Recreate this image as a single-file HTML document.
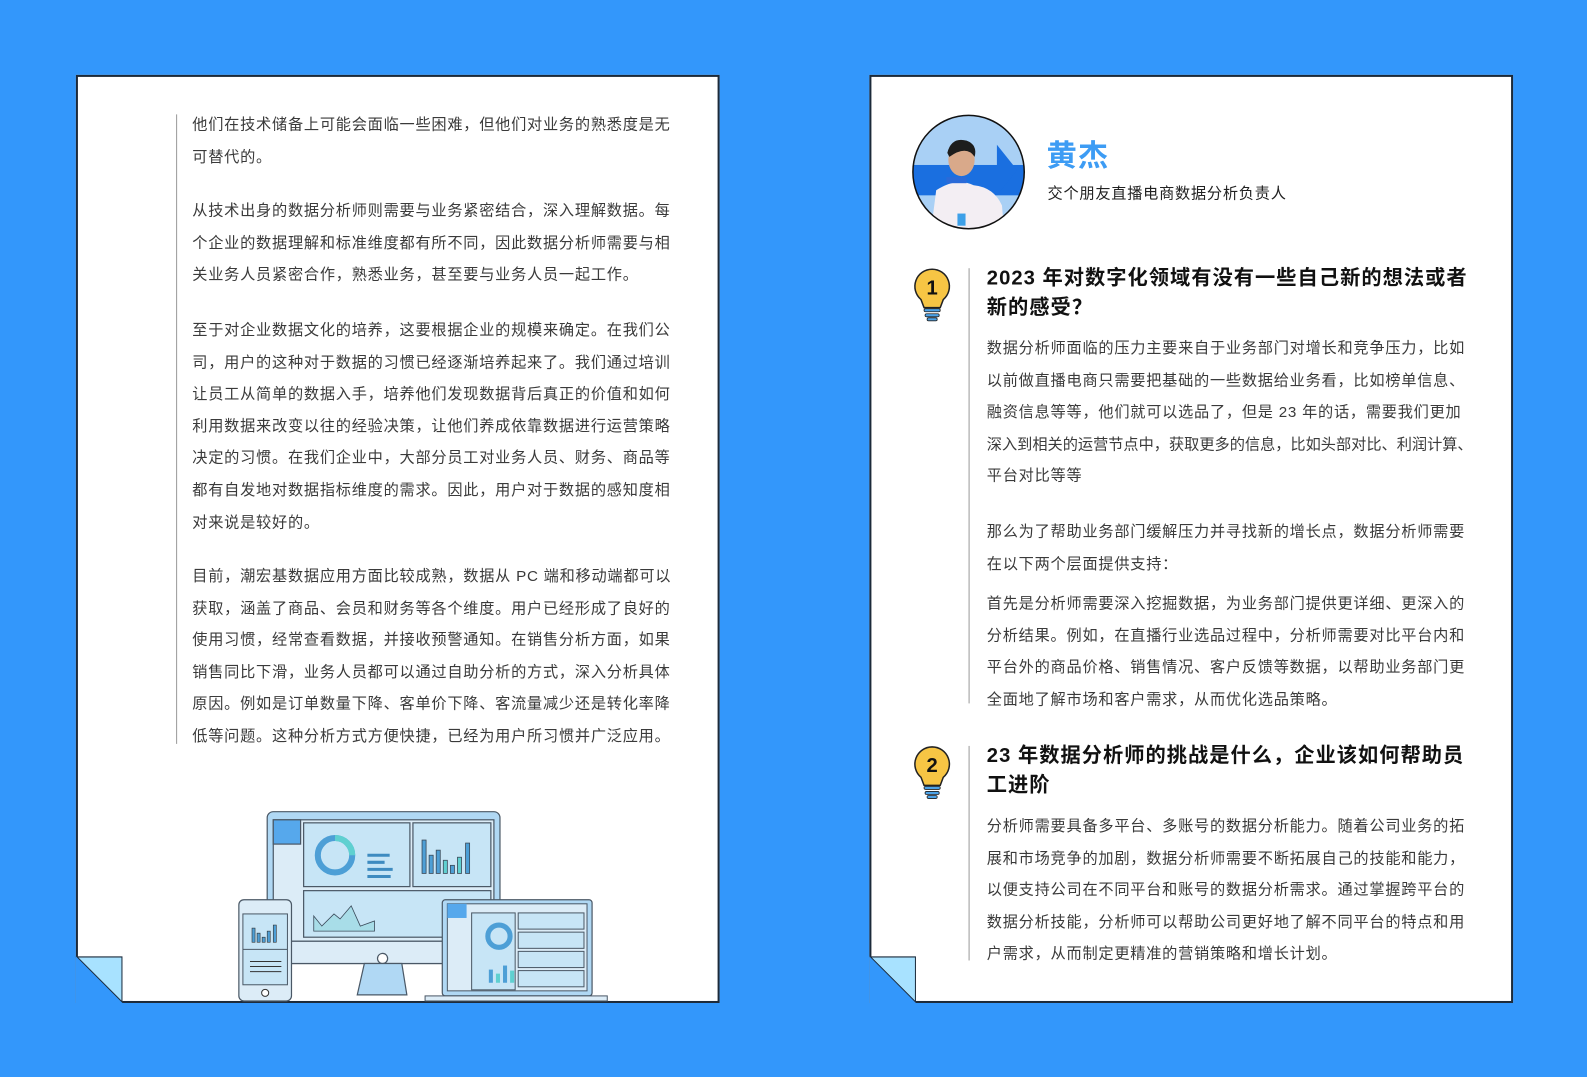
<!DOCTYPE html>
<html><head><meta charset="utf-8"><style>
*{margin:0;padding:0;box-sizing:border-box}
body{width:1587px;height:1077px;background:#3397fb;position:relative;overflow:hidden;font-family:"Liberation Sans","Noto Sans CJK SC",sans-serif}
#w{position:absolute;left:0;top:0;width:1568px;height:1064px;transform:scale(1.0121);transform-origin:0 0}
.page{position:absolute;top:74px;width:636px;height:917px;background:#fff;border:2px solid #1c2a3a}
.fold{position:absolute;left:-2px;bottom:-2px;width:46px;height:46px}
.t{position:absolute;font-size:15px;color:#3a3a3a;line-height:31.6px;letter-spacing:0.75px;white-space:nowrap}
.vl{position:absolute;width:1px;background:#9a9a9a}
.h{position:absolute;font-size:20px;font-weight:bold;color:#111;line-height:28.5px;white-space:nowrap;letter-spacing:1px}
</style></head><body><div id="w">

<div class="page" style="left:75px">
<svg class="fold" viewBox="0 0 46 46"><polygon points="0,0 46,0 46,46" fill="#a8e2ff" stroke="#1c2a3a" stroke-width="2"/><polygon points="0,0 0,46 46,46" fill="#3397fb"/></svg>
</div>
<div class="page" style="left:859px">
<svg class="fold" viewBox="0 0 46 46"><polygon points="0,0 46,0 46,46" fill="#a8e2ff" stroke="#1c2a3a" stroke-width="2"/><polygon points="0,0 0,46 46,46" fill="#3397fb"/></svg>
</div>

<div class="vl" style="left:174px;top:113px;height:622px"></div>
<div class="t" style="left:190px;top:108px">他们在技术储备上可能会面临一些困难，但他们对业务的熟悉度是无<br>可替代的。</div>
<div class="t" style="left:190px;top:193px">从技术出身的数据分析师则需要与业务紧密结合，深入理解数据。每<br>个企业的数据理解和标准维度都有所不同，因此数据分析师需要与相<br>关业务人员紧密合作，熟悉业务，甚至要与业务人员一起工作。</div>
<div class="t" style="left:190px;top:311px">至于对企业数据文化的培养，这要根据企业的规模来确定。在我们公<br>司，用户的这种对于数据的习惯已经逐渐培养起来了。我们通过培训<br>让员工从简单的数据入手，培养他们发现数据背后真正的价值和如何<br>利用数据来改变以往的经验决策，让他们养成依靠数据进行运营策略<br>决定的习惯。在我们企业中，大部分员工对业务人员、财务、商品等<br>都有自发地对数据指标维度的需求。因此，用户对于数据的感知度相<br>对来说是较好的。</div>
<div class="t" style="left:190px;top:554px">目前，潮宏基数据应用方面比较成熟，数据从 PC 端和移动端都可以<br>获取，涵盖了商品、会员和财务等各个维度。用户已经形成了良好的<br>使用习惯，经常查看数据，并接收预警通知。在销售分析方面，如果<br>销售同比下滑，业务人员都可以通过自助分析的方式，深入分析具体<br>原因。例如是订单数量下降、客单价下降、客流量减少还是转化率降<br>低等问题。这种分析方式方便快捷，已经为用户所习惯并广泛应用。</div>

<svg style="position:absolute;left:230px;top:800px" width="380" height="190" viewBox="230 800 380 190">
<g stroke="#4a5866" stroke-width="1.2">
<rect x="264" y="802" width="230" height="150" rx="6" fill="#b0d8f4"/>
<rect x="270" y="810" width="218" height="120" fill="#dcecf7"/>
<rect x="270" y="810" width="27" height="24" fill="#56a8ec"/>
<rect x="300" y="813" width="105" height="63" fill="#c7e5f6"/>
<rect x="408" y="813" width="77" height="63" fill="#c7e5f6"/>
<rect x="300" y="880" width="185" height="46" fill="#c7e5f6"/>
<rect x="265" y="930" width="228" height="22" fill="#dcecf7"/>
<circle cx="378" cy="947" r="5" fill="#fff"/>
<path d="M360 952 L397 952 L402 983 L353 983 Z" fill="#b0d8f4"/>
</g>
<circle cx="331" cy="845" r="17" fill="none" stroke="#4d9fd6" stroke-width="6"/>
<path d="M331 828 A17 17 0 0 1 348 845" fill="none" stroke="#5fd0d0" stroke-width="6"/>
<g stroke="#3e8bc0" stroke-width="3"><line x1="363" y1="845" x2="385" y2="845"/><line x1="363" y1="852" x2="380" y2="852"/><line x1="363" y1="859" x2="388" y2="859"/><line x1="363" y1="866" x2="386" y2="866"/></g>
<g fill="#4d9fd6" stroke="#3a4a5a" stroke-width="0.8"><rect x="417" y="830" width="4" height="33"/><rect x="424" y="845" width="4" height="18"/><rect x="431" y="840" width="4" height="23"/><rect x="438" y="850" width="4" height="13" fill="#5fd0d0"/><rect x="445" y="855" width="4" height="8"/><rect x="452" y="847" width="4" height="16" fill="#5fd0d0"/><rect x="460" y="833" width="4" height="30"/></g>
<path d="M310 905 L318 915 L330 903 L336 908 L347 895 L356 915 L370 910 L370 920 L310 920 Z" fill="#a8dde8" stroke="#3a4a5a" stroke-width="0.8"/>
<rect x="236" y="889" width="52" height="100" rx="5" fill="#dcecf7" stroke="#4a5866" stroke-width="1.2"/>
<rect x="240" y="903" width="44" height="70" fill="#c7e5f6" stroke="#4a5866" stroke-width="1"/>
<line x1="240" y1="938" x2="284" y2="938" stroke="#4a5866"/>
<g fill="#4d9fd6" stroke="#333" stroke-width="0.6"><rect x="249" y="917" width="3" height="14"/><rect x="254" y="922" width="3" height="9"/><rect x="259" y="926" width="3" height="5"/><rect x="264" y="920" width="3" height="11"/><rect x="270" y="914" width="3" height="17"/></g>
<g stroke="#333"><line x1="247" y1="950" x2="278" y2="950"/><line x1="247" y1="955" x2="278" y2="955"/><line x1="247" y1="960" x2="278" y2="960"/></g>
<circle cx="262" cy="981" r="3.5" fill="#fff" stroke="#333"/>
<rect x="437" y="889" width="148" height="95" rx="3" fill="#b0d8f4" stroke="#4a5866" stroke-width="1.2"/>
<rect x="442" y="893" width="138" height="86" fill="#dcecf7" stroke="#4a5866"/>
<rect x="442" y="893" width="19" height="14" fill="#56a8ec"/>
<rect x="466" y="902" width="43" height="76" fill="#c7e5f6" stroke="#4a5866"/>
<g fill="#c7e5f6" stroke="#4a5866"><rect x="512" y="902" width="65" height="16"/><rect x="512" y="921" width="65" height="16"/><rect x="512" y="940" width="65" height="16"/><rect x="512" y="959" width="65" height="16"/></g>
<circle cx="493" cy="925" r="11" fill="none" stroke="#4d9fd6" stroke-width="5"/>
<g fill="#4d9fd6"><rect x="483" y="958" width="4" height="13"/><rect x="490" y="962" width="4" height="9" fill="#5fd0d0"/><rect x="497" y="954" width="4" height="17"/><rect x="504" y="959" width="4" height="12" fill="#5fd0d0"/></g>
<rect x="420" y="984" width="180" height="5" fill="#dcecf7" stroke="#4a5866"/>
</svg>

<svg style="position:absolute;left:900px;top:113px" width="114" height="114" viewBox="0 0 114 114">
<defs><clipPath id="c"><ellipse cx="57" cy="57" rx="55" ry="56"/></clipPath></defs>
<g clip-path="url(#c)">
<rect width="114" height="114" fill="#a9d0f5"/>
<rect y="50" width="114" height="30" fill="#1a6fe0"/>
<path d="M85 30 L105 55 L85 80 Z" fill="#1a6fe0"/>
<path d="M20 114 L25 75 Q45 62 62 70 Q82 72 90 90 L92 114 Z" fill="#f3eef3"/>
<ellipse cx="50" cy="45" rx="13" ry="16" fill="#d9a98a"/>
<path d="M36 38 Q40 22 55 26 Q66 30 63 42 Q55 30 38 42 Z" fill="#1d1d1d"/>
<rect x="35" y="62" width="20" height="6" fill="#2a6ad8"/>
<rect x="46" y="98" width="8" height="12" fill="#3da0e8"/>
</g>
<ellipse cx="57" cy="57" rx="55" ry="56" fill="none" stroke="#111" stroke-width="1.5"/>
</svg>
<div style="position:absolute;left:1034px;top:135px;font-size:30px;font-weight:bold;color:#3d9cf4;line-height:40px;letter-spacing:1px">黄杰</div>
<div class="t" style="left:1035px;top:176px;color:#222">交个朋友直播电商数据分析负责人</div>

<svg style="position:absolute;left:902px;top:263px" width="40" height="56" viewBox="0 0 40 56">
<path d="M19 3 A17 17 0 0 1 30 33 L27 41 L11 41 L8 33 A17 17 0 0 1 19 3 Z" fill="#f7c544" stroke="#222" stroke-width="1.5"/>
<rect x="11" y="42" width="16" height="3" rx="1.5" fill="#4da3e8" stroke="#222" stroke-width="0.8"/>
<rect x="12" y="47" width="14" height="3" rx="1.5" fill="#4da3e8" stroke="#222" stroke-width="0.8"/>
<rect x="14" y="51" width="10" height="3" rx="1.5" fill="#4da3e8" stroke="#222" stroke-width="0.8"/>
<text x="19" y="28" text-anchor="middle" font-size="20" font-weight="bold" font-family="Liberation Sans,sans-serif" fill="#111">1</text>
</svg>
<svg style="position:absolute;left:902px;top:735px" width="40" height="56" viewBox="0 0 40 56">
<path d="M19 3 A17 17 0 0 1 30 33 L27 41 L11 41 L8 33 A17 17 0 0 1 19 3 Z" fill="#f7c544" stroke="#222" stroke-width="1.5"/>
<rect x="11" y="42" width="16" height="3" rx="1.5" fill="#4da3e8" stroke="#222" stroke-width="0.8"/>
<rect x="12" y="47" width="14" height="3" rx="1.5" fill="#4da3e8" stroke="#222" stroke-width="0.8"/>
<rect x="14" y="51" width="10" height="3" rx="1.5" fill="#4da3e8" stroke="#222" stroke-width="0.8"/>
<text x="19" y="28" text-anchor="middle" font-size="20" font-weight="bold" font-family="Liberation Sans,sans-serif" fill="#111">2</text>
</svg>

<div class="vl" style="left:957px;top:265px;height:430px"></div>
<div class="vl" style="left:957px;top:737px;height:212px"></div>

<div class="h" style="left:975px;top:261px">2023 年对数字化领域有没有一些自己新的想法或者<br>新的感受？</div>
<div class="t" style="left:975px;top:329px">数据分析师面临的压力主要来自于业务部门对增长和竞争压力，比如<br>以前做直播电商只需要把基础的一些数据给业务看，比如榜单信息、<br>融资信息等等，他们就可以选品了，但是 23 年的话，需要我们更加<br><span style="letter-spacing:0">深入到相关的运营节点中，获取更多的信息，比如头部对比、利润计算、</span><br>平台对比等等</div>
<div class="t" style="left:975px;top:510px">那么为了帮助业务部门缓解压力并寻找新的增长点，数据分析师需要<br>在以下两个层面提供支持：</div>
<div class="t" style="left:975px;top:581px">首先是分析师需要深入挖掘数据，为业务部门提供更详细、更深入的<br>分析结果。例如，在直播行业选品过程中，分析师需要对比平台内和<br>平台外的商品价格、销售情况、客户反馈等数据，以帮助业务部门更<br>全面地了解市场和客户需求，从而优化选品策略。</div>
<div class="h" style="left:975px;top:733px">23 年数据分析师的挑战是什么，企业该如何帮助员<br>工进阶</div>
<div class="t" style="left:975px;top:801px">分析师需要具备多平台、多账号的数据分析能力。随着公司业务的拓<br>展和市场竞争的加剧，数据分析师需要不断拓展自己的技能和能力，<br>以便支持公司在不同平台和账号的数据分析需求。通过掌握跨平台的<br>数据分析技能，分析师可以帮助公司更好地了解不同平台的特点和用<br>户需求，从而制定更精准的营销策略和增长计划。</div>
</div></body></html>
